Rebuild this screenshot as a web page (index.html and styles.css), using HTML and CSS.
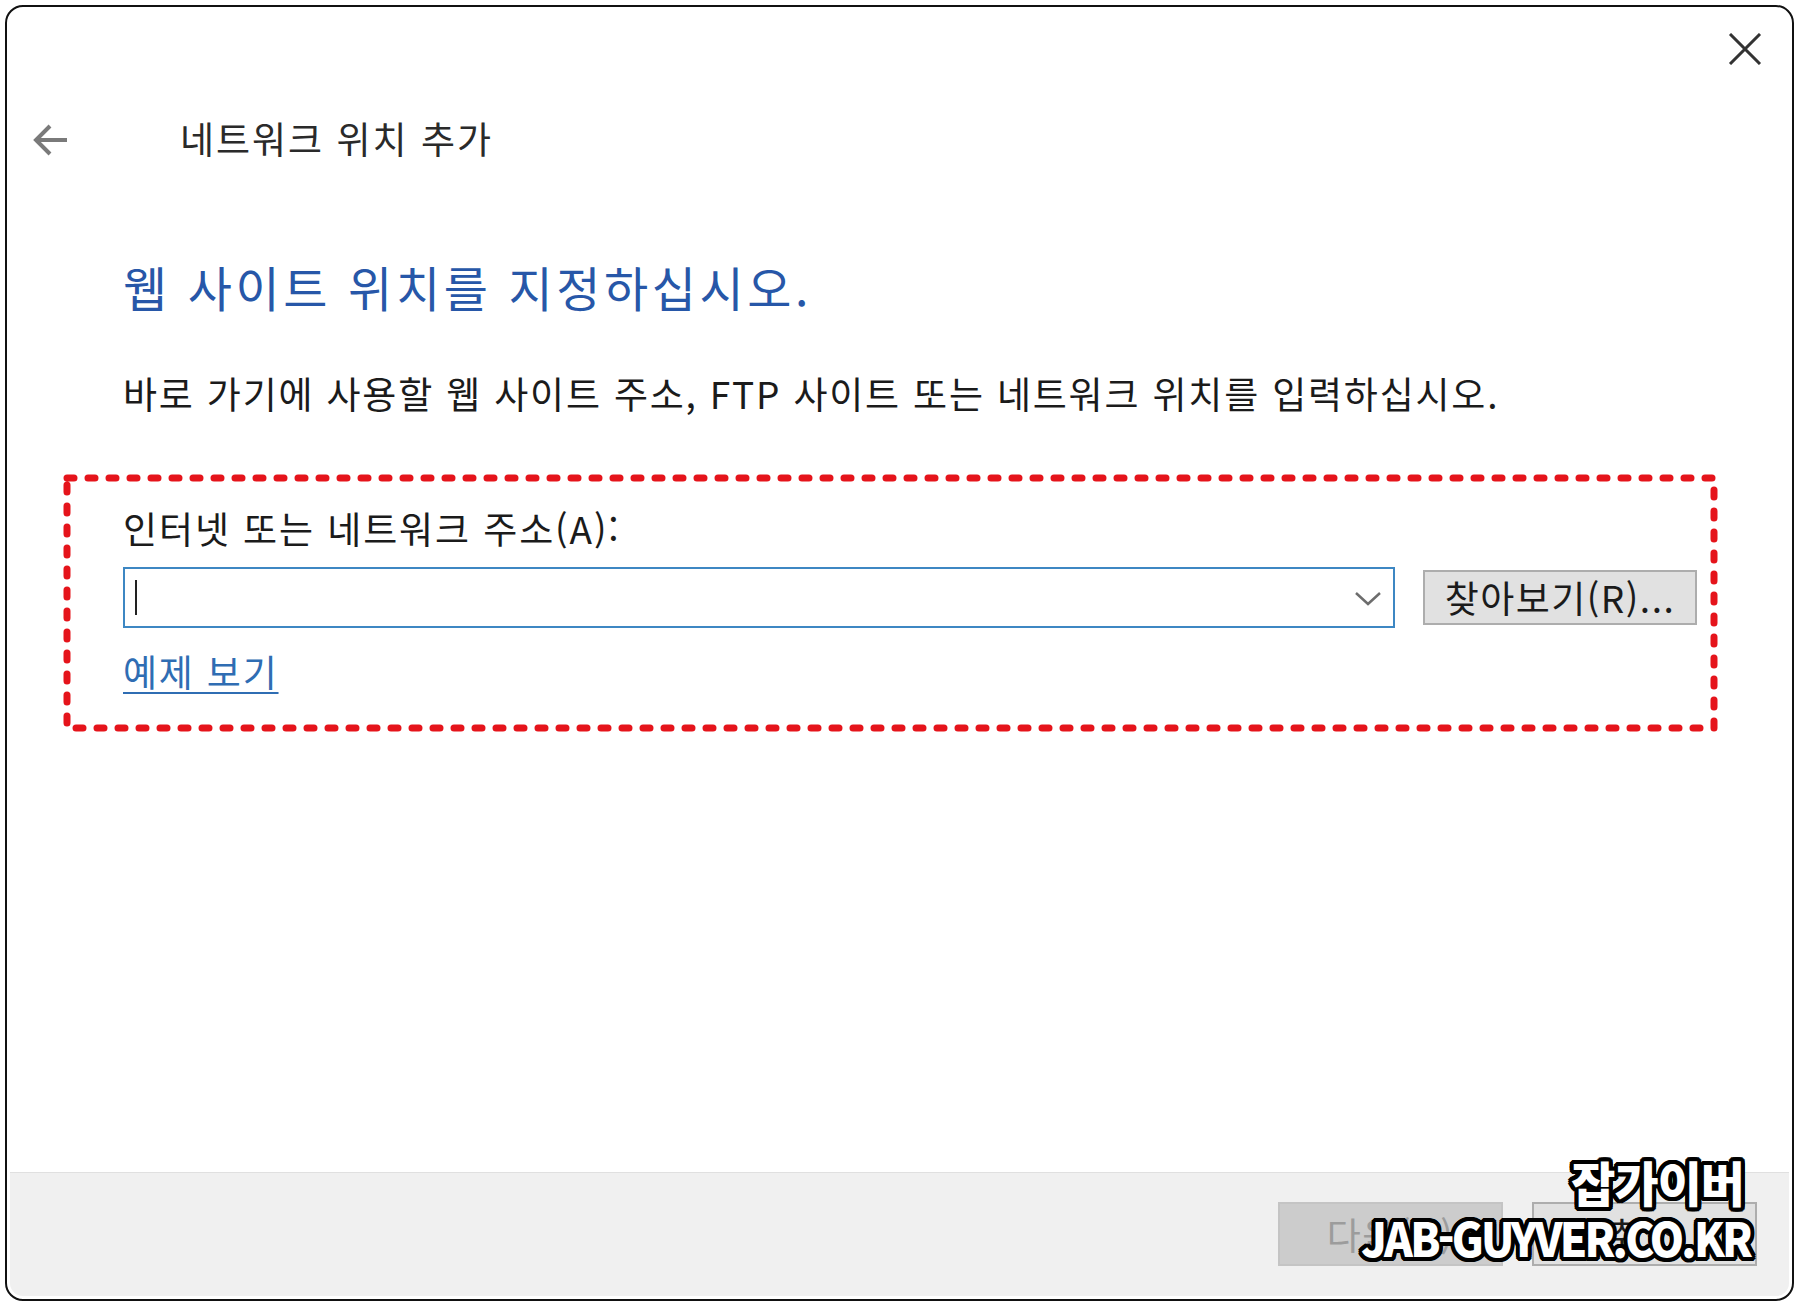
FILE: index.html
```html
<!DOCTYPE html>
<html lang="ko">
<head>
<meta charset="utf-8">
<title>네트워크 위치 추가</title>
<link rel="stylesheet" href="styles.css">
</head>
<body>
<div class="window">
  <div class="titlebar">
    <button class="close" aria-label="닫기">
      <svg width="34" height="32" viewBox="0 0 34 32"><path d="M2 1 L32 31 M32 1 L2 31" stroke="#333" stroke-width="3" fill="none"/></svg>
    </button>
  </div>
  <div class="nav">
    <svg class="back" width="38" height="34" viewBox="0 0 38 34"><path d="M36 17 H5 M19 3 L5 17 L19 31" stroke="#7a7a7a" stroke-width="4" fill="none"/></svg>
    <span class="nav-title">네트워크 위치 추가</span>
  </div>
  <main class="content">
    <h1 class="heading">웹 사이트 위치를 지정하십시오.</h1>
    <p class="desc">바로 가기에 사용할 웹 사이트 주소, FTP 사이트 또는 네트워크 위치를 입력하십시오.</p>
    <section class="highlight">
      <svg class="dash-frame" width="1655" height="258" viewBox="0 0 1655 258"><rect x="4" y="4" width="1647" height="250" fill="none" stroke="#e5141b" stroke-width="7" stroke-dasharray="7 14" stroke-linecap="round"/></svg>
      <label class="field-label">인터넷 또는 네트워크 주소(A):</label>
      <div class="field-row">
        <div class="combo">
          <span class="caret"></span>
          <svg class="chevron" width="26" height="14" viewBox="0 0 26 14"><path d="M1 1 L13 12 L25 1" stroke="#6d6d6d" stroke-width="2.5" fill="none"/></svg>
        </div>
        <button class="btn browse">찾아보기(R)...</button>
      </div>
      <a class="example" href="#">예제 보기</a>
    </section>
  </main>
  <footer class="footer">
    <button class="btn next" disabled>다음(N)</button>
    <button class="btn cancel">취소</button>
  </footer>
  <div class="watermark">
    <span class="wm-ko">잡가이버</span>
    <span class="wm-en">JAB-GUYVER.CO.KR</span>
  </div>
</div>
</body>
</html>
```
FILE: styles.css
```css
* { box-sizing: border-box; }
html, body { margin: 0; padding: 0; background: #fff; }
body {
  font-family: "Noto Sans CJK KR", "Noto Sans", sans-serif;
  color: #1b1b1b;
}
.window {
  position: relative;
  margin: 5px 0 0 5px;
  width: 1789px;
  height: 1296px;
  border: 2px solid #111;
  border-radius: 18px;
  padding: 3px;
  display: flex;
  flex-direction: column;
  background: #fff;
}
.titlebar {
  height: 80px;
  display: flex;
  justify-content: flex-end;
  align-items: flex-start;
}
.close {
  margin: 23px 27px 0 0;
  padding: 0;
  border: 0;
  background: none;
  width: 34px;
  height: 32px;
  display: block;
}
.close svg { display: block; }
.nav {
  height: 96px;
  display: flex;
  align-items: center;
}
.back { margin-left: 21px; margin-top: 4px; flex: none; }
.nav-title {
  margin-left: 111px;
  font-size: 37px;
  line-height: 48px;
  letter-spacing: 2px;
  color: #2a2a2a;
}
.content {
  padding-left: 113px;
}
.heading {
  margin: 70px 0 0;
  font-size: 48px;
  line-height: 60px;
  font-weight: 400;
  letter-spacing: 3.6px;
  color: #2757a8;
}
.desc {
  margin: 53px 0 0;
  font-size: 37px;
  line-height: 48px;
  letter-spacing: 1.8px;
}
.highlight {
  position: relative;
  margin: 57px 0 0 -60px;
  width: 1655px;
  height: 258px;
  padding: 30px 21px 0 60px;
  display: flex;
  flex-direction: column;
  align-items: flex-start;
}
.dash-frame {
  position: absolute;
  left: 0;
  top: 0;
}
.field-label {
  font-size: 37px;
  line-height: 48px;
  letter-spacing: 1.9px;
}
.field-row {
  margin-top: 15px;
  display: flex;
  align-items: center;
  gap: 28px;
}
.combo {
  width: 1272px;
  height: 61px;
  border: 2px solid #3d87c3;
  background: #fff;
  display: flex;
  align-items: center;
  justify-content: space-between;
  padding: 0 12px 0 10px;
}
.caret {
  width: 2px;
  height: 35px;
  background: #222;
}
.chevron { display: block; margin-top: 2px; }
.btn {
  font-family: "Noto Sans CJK KR", "Noto Sans", sans-serif;
  font-size: 37px;
  line-height: 1;
  letter-spacing: 1.5px;
  color: #1b1b1b;
  background: #e1e1e1;
  border: 2px solid #adadad;
  padding: 0;
}
.browse {
  width: 274px;
  height: 55px;
}
.example {
  margin-top: 19px;
  font-size: 37px;
  line-height: 48px;
  letter-spacing: 1.8px;
  color: #2f6db3;
  text-decoration: underline;
  text-decoration-thickness: 2px;
  text-underline-offset: 5px;
}
.footer {
  margin-top: auto;
  height: 124px;
  background: #f0f0f0;
  border-top: 1px solid #e0e0e0;
  border-radius: 0 0 13px 13px;
  display: flex;
  justify-content: flex-end;
  align-items: flex-start;
  gap: 29px;
  padding: 29px 32px 0 0;
}
.footer .btn {
  width: 225px;
  height: 64px;
}
.next {
  background: #cccccc;
  border-color: #c4c4c4;
  color: #9c9c9c;
}
.cancel {
  background: #e1e1e1;
  border-color: #adadad;
}
.watermark {
  position: absolute;
  right: 42px;
  top: 1146px;
  display: flex;
  flex-direction: column;
  align-items: flex-end;
  font-family: "Noto Sans CJK KR", sans-serif;
  font-weight: 900;
  color: #fff;
  text-shadow:
    4px 0 0 #000, -4px 0 0 #000, 0 4px 0 #000, 0 -4px 0 #000,
    3px 3px 0 #000, -3px 3px 0 #000, 3px -3px 0 #000, -3px -3px 0 #000,
    4px 2px 0 #000, 4px -2px 0 #000, -4px 2px 0 #000, -4px -2px 0 #000,
    2px 4px 0 #000, -2px 4px 0 #000, 2px -4px 0 #000, -2px -4px 0 #000,
    0 0 2px #000;
}
.wm-ko {
  font-size: 48px;
  line-height: 56px;
  letter-spacing: -1px;
  margin-right: 6px;
}
.wm-en {
  display: inline-block;
  margin-top: 2px;
  font-size: 47px;
  line-height: 52px;
  letter-spacing: -3px;
  transform: scaleX(0.93);
  transform-origin: right center;
}
```
